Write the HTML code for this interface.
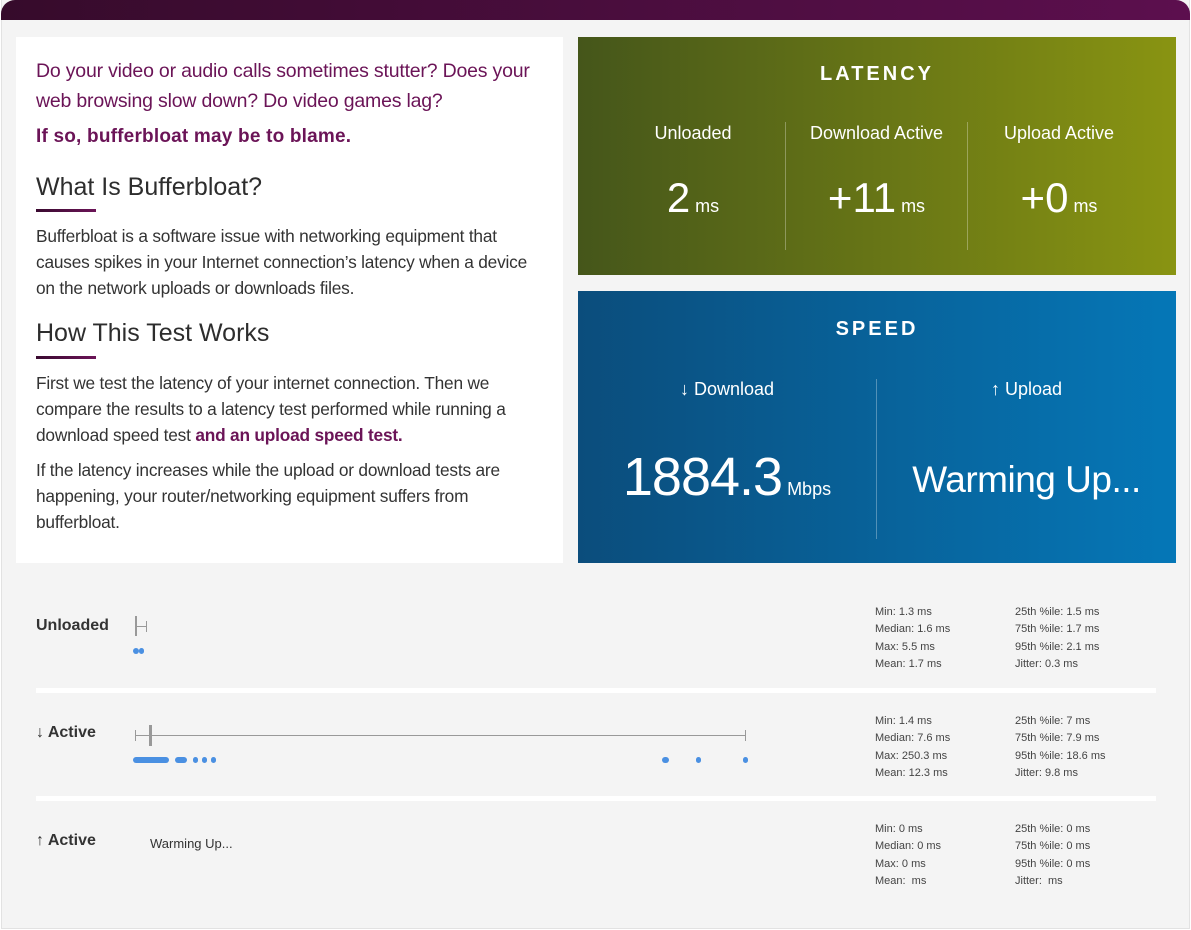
<!DOCTYPE html>
<html><head><meta charset="utf-8">
<style>
*{margin:0;padding:0;box-sizing:border-box}
html,body{width:1191px;height:930px;overflow:hidden;background:#fff;font-family:"Liberation Sans",sans-serif}
.page{position:absolute;left:1px;top:0;width:1189px;height:929px;background:#f4f4f4;border:1px solid #e2e2e2;border-top:none}
.top{position:absolute;left:1px;top:0;width:1189px;height:20px;border-radius:14px 14px 0 0;background:linear-gradient(90deg,#360b2b,#5c0f4e)}
.abs{position:absolute;white-space:nowrap}
.white{position:absolute;left:16px;top:37px;width:547px;height:526px;background:#fff}
.lead{color:#6b1457;font-size:19.5px;letter-spacing:-0.2px}
.body{color:#333;font-size:17.3px;letter-spacing:-0.2px}
.h{color:#2d2d2d;font-size:25px}
.bar{position:absolute;width:60px;height:3px;background:linear-gradient(90deg,#3a0a30,#6b1457)}
.lat{position:absolute;left:578px;top:37px;width:598px;height:238px;background:linear-gradient(90deg,#45561a,#899412)}
.spd{position:absolute;left:578px;top:291px;width:598px;height:272px;background:linear-gradient(90deg,#0b4d7c,#0577b7)}
.w{color:#fff;position:absolute;white-space:nowrap;text-align:center}
.vl{position:absolute;width:1px;background:rgba(255,255,255,0.3)}
.sep{position:absolute;left:36px;width:1120px;height:5px;background:#fff}
.st{position:absolute;font-size:11px;color:#444;line-height:17.3px;white-space:nowrap}
.lbl{position:absolute;font-size:16px;font-weight:bold;color:#333;white-space:nowrap}
.dot{position:absolute;width:6px;height:6px;border-radius:3px;background:#4a90e2}
.gl{position:absolute;background:#999}
</style></head><body>
<div class="page"></div>
<div class="top"></div>
<div class="white"></div>
<div class="abs lead" style="left:36px;top:56px;line-height:30px">Do your video or audio calls sometimes stutter? Does your<br>web browsing slow down? Do video games lag?</div>
<div class="abs" style="left:36px;top:126px;font-size:19px;font-weight:bold;color:#6b1457;letter-spacing:0.2px">If so, bufferbloat may be to blame.</div>
<div class="abs h" style="left:36px;top:173px">What Is Bufferbloat?</div>
<div class="bar" style="left:36px;top:209px"></div>
<div class="abs body" style="left:36px;top:223px;line-height:26px">Bufferbloat is a software issue with networking equipment that<br>causes spikes in your Internet connection’s latency when a device<br>on the network uploads or downloads files.</div>
<div class="abs h" style="left:36px;top:319px">How This Test Works</div>
<div class="bar" style="left:36px;top:356px"></div>
<div class="abs body" style="left:36px;top:370px;line-height:26px">First we test the latency of your internet connection. Then we<br>compare the results to a latency test performed while running a<br>download speed test <b style="color:#6b1457">and an upload speed test.</b></div>
<div class="abs body" style="left:36px;top:457px;line-height:26px">If the latency increases while the upload or download tests are<br>happening, your router/networking equipment suffers from<br>bufferbloat.</div>

<div class="lat"></div>
<div class="w" style="left:578px;width:598px;top:63px;font-size:20px;font-weight:bold;letter-spacing:3px">LATENCY</div>
<div class="vl" style="left:785px;top:122px;height:128px"></div>
<div class="vl" style="left:967px;top:122px;height:128px"></div>
<div class="w" style="left:600px;width:186px;top:123px;font-size:18px">Unloaded</div>
<div class="w" style="left:786px;width:181px;top:123px;font-size:18px">Download Active</div>
<div class="w" style="left:968px;width:182px;top:123px;font-size:18px">Upload Active</div>
<div class="w" style="left:600px;width:186px;top:174px;font-size:42px">2<span style="font-size:18px"> ms</span></div>
<div class="w" style="left:786px;width:181px;top:174px;font-size:42px">+11<span style="font-size:18px"> ms</span></div>
<div class="w" style="left:968px;width:182px;top:174px;font-size:42px">+0<span style="font-size:18px"> ms</span></div>

<div class="spd"></div>
<div class="w" style="left:578px;width:598px;top:318px;font-size:20px;font-weight:bold;letter-spacing:3px">SPEED</div>
<div class="vl" style="left:876px;top:379px;height:160px"></div>
<div class="w" style="left:578px;width:298px;top:379px;font-size:18px">↓ Download</div>
<div class="w" style="left:877px;width:299px;top:379px;font-size:18px">↑ Upload</div>
<div class="w" style="left:578px;width:298px;top:446px;font-size:54px;letter-spacing:-1px">1884.3<span style="font-size:18px;letter-spacing:0"> Mbps</span></div>
<div class="w" style="left:877px;width:299px;top:459px;font-size:37px;letter-spacing:-0.5px">Warming Up...</div>

<div class="lbl" style="left:36px;top:617px">Unloaded</div>
<div class="gl" style="left:135px;top:616px;width:2px;height:20px"></div>
<div class="gl" style="left:137px;top:626px;width:9px;height:1px"></div>
<div class="gl" style="left:146px;top:621px;width:1px;height:11px"></div>
<div class="dot" style="left:133px;top:648px"></div><div class="dot" style="left:139px;top:648px;width:5px"></div>

<div class="sep" style="top:688px"></div>
<div class="lbl" style="left:36px;top:724px">↓ Active</div>
<div class="gl" style="left:135px;top:730px;width:1px;height:11px"></div>
<div class="gl" style="left:135px;top:735px;width:611px;height:1px"></div>
<div class="gl" style="left:149px;top:725px;width:3px;height:21px"></div>
<div class="gl" style="left:745px;top:730px;width:1px;height:11px"></div>
<div class="dot" style="left:133px;top:757px;width:36px"></div>
<div class="dot" style="left:175px;top:757px;width:12px"></div>
<div class="dot" style="left:193px;top:757px;width:5px"></div>
<div class="dot" style="left:202px;top:757px;width:5px"></div>
<div class="dot" style="left:211px;top:757px;width:5px"></div>
<div class="dot" style="left:662px;top:757px;width:7px"></div>
<div class="dot" style="left:696px;top:757px;width:5px"></div>
<div class="dot" style="left:743px;top:757px;width:5px"></div>

<div class="sep" style="top:796px"></div>
<div class="lbl" style="left:36px;top:832px">↑ Active</div>
<div class="abs" style="left:150px;top:836px;font-size:13px;color:#333">Warming Up...</div>

<div class="st" style="left:875px;top:604px">Min: 1.3 ms<br>Median: 1.6 ms<br>Max: 5.5 ms<br>Mean: 1.7 ms</div>
<div class="st" style="left:1015px;top:604px">25th %ile: 1.5 ms<br>75th %ile: 1.7 ms<br>95th %ile: 2.1 ms<br>Jitter: 0.3 ms</div>
<div class="st" style="left:875px;top:713px">Min: 1.4 ms<br>Median: 7.6 ms<br>Max: 250.3 ms<br>Mean: 12.3 ms</div>
<div class="st" style="left:1015px;top:713px">25th %ile: 7 ms<br>75th %ile: 7.9 ms<br>95th %ile: 18.6 ms<br>Jitter: 9.8 ms</div>
<div class="st" style="left:875px;top:821px">Min: 0 ms<br>Median: 0 ms<br>Max: 0 ms<br>Mean:&nbsp; ms</div>
<div class="st" style="left:1015px;top:821px">25th %ile: 0 ms<br>75th %ile: 0 ms<br>95th %ile: 0 ms<br>Jitter:&nbsp; ms</div>
</body></html>
